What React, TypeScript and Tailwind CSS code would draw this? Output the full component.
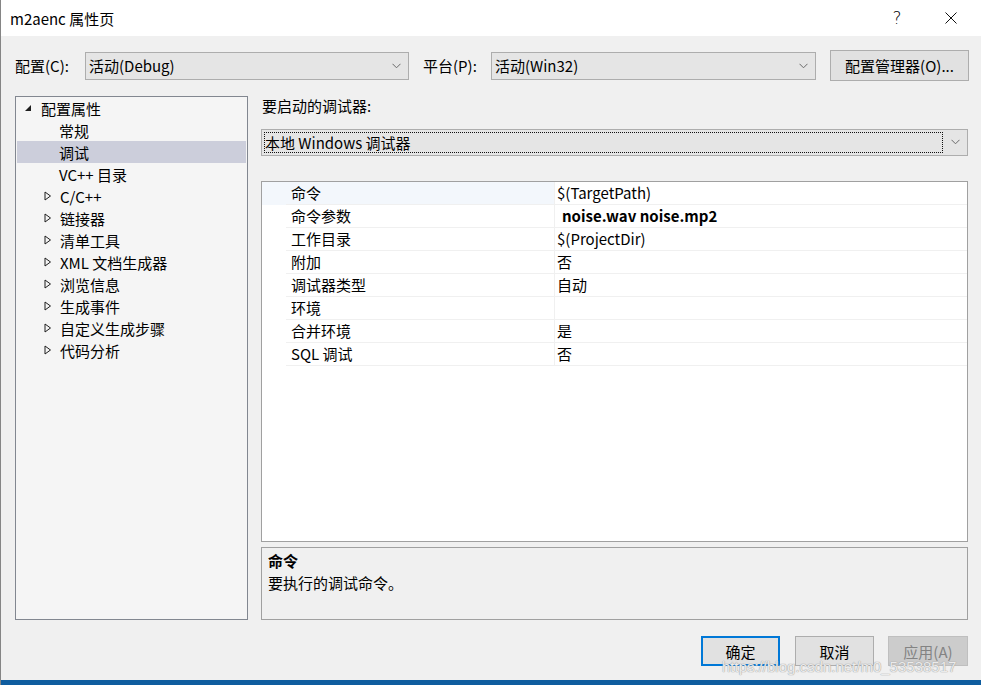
import React from "react";

const FONT = { fontFamily: '"Noto Sans CJK SC", "Noto Sans", sans-serif' };

function Chevron() {
  return (
    <svg width="9" height="6" viewBox="0 0 9 6" className="shrink-0">
      <path d="M0.5 0.8 L4.5 4.8 L8.5 0.8" fill="none" stroke="#6a6a6a" strokeWidth="1" />
    </svg>
  );
}

function Combo({ text, width }: { text: string; width: string }) {
  return (
    <div className={`${width} h-[28px] bg-[#e5e5e5] border border-[#adadad] flex items-center pl-[3px] pr-[7px]`}>
      <span className="flex-1 text-[15px] leading-none text-black">{text}</span>
      <Chevron />
    </div>
  );
}

function ExpandedTri() {
  return (
    <svg width="8" height="8" viewBox="0 0 8 8" className="shrink-0">
      <polygon points="7,1 7,7 1,7" fill="#1e1e1e" />
    </svg>
  );
}

function CollapsedTri() {
  return (
    <svg width="8" height="10" viewBox="0 0 8 10" className="shrink-0">
      <polygon points="1,1 6.5,5 1,9" fill="none" stroke="#1e1e1e" strokeWidth="1" />
    </svg>
  );
}

const children = ["常规", "调试", "VC++ 目录"];
const collapsed = ["C/C++", "链接器", "清单工具", "XML 文档生成器", "浏览信息", "生成事件", "自定义生成步骤", "代码分析"];

const props: [string, string, boolean?][] = [
  ["命令", "$(TargetPath)"],
  ["命令参数", "noise.wav noise.mp2", true],
  ["工作目录", "$(ProjectDir)"],
  ["附加", "否"],
  ["调试器类型", "自动"],
  ["环境", ""],
  ["合并环境", "是"],
  ["SQL 调试", "否"],
];

export default function App() {
  return (
    <div style={FONT} className="w-[981px] h-[685px] bg-[#f0f0f0] flex flex-col border-l border-[#858585] overflow-hidden relative text-black">
      {/* Title bar */}
      <div className="h-[36px] bg-white flex items-center shrink-0">
        <span className="pl-[9px] text-[15px] leading-none flex-1">m2aenc 属性页</span>
        <span className="w-[20px] text-center text-[17px] leading-none mr-[38px]" style={{ fontFamily: '"DejaVu Sans", sans-serif', fontWeight: 200 }}>?</span>
        <svg width="12" height="12" viewBox="0 0 12 12" className="mr-[24px]">
          <path d="M0.5 0.5 L11.5 11.5 M11.5 0.5 L0.5 11.5" stroke="#111" strokeWidth="1" />
        </svg>
      </div>

      {/* Config row */}
      <div className="mt-[14px] h-[31px] flex items-center shrink-0 pl-[14px]">
        <span className="w-[70px] text-[15px] leading-none">配置(C):</span>
        <Combo text="活动(Debug)" width="w-[324px]" />
        <span className="ml-[14px] w-[68px] text-[15px] leading-none">平台(P):</span>
        <Combo text="活动(Win32)" width="w-[325px]" />
        <div className="ml-[14px] w-[139px] h-[31px] bg-[#e1e1e1] border border-[#adadad] flex items-center justify-center text-[15px] leading-none">
          配置管理器(O)...
        </div>
      </div>

      {/* Main area */}
      <div className="mt-[15px] h-[524px] flex shrink-0 pl-[14px]">
        {/* Tree */}
        <div className="w-[233px] h-full bg-[#f5f5f5] border border-[#828790] px-[1px] flex flex-col">
          <div className="h-[22px] flex items-center pl-[7px]">
            <ExpandedTri />
            <span className="ml-[9px] text-[15px] leading-none">配置属性</span>
          </div>
          {children.map((c) => (
            <div key={c} className={`h-[22px] flex items-center pl-[42px] ${c === "调试" ? "bg-[#cccedb]" : ""}`}>
              <span className="text-[15px] leading-none">{c}</span>
            </div>
          ))}
          {collapsed.map((c) => (
            <div key={c} className="h-[22px] flex items-center pl-[27px]">
              <CollapsedTri />
              <span className="ml-[8px] text-[15px] leading-none">{c}</span>
            </div>
          ))}
        </div>

        {/* Right column */}
        <div className="ml-[13px] w-[707px] flex flex-col">
          <div className="h-[20px] flex items-center pl-[1px] text-[15px] leading-none">要启动的调试器:</div>
          <div className="mt-[13px] h-[27px] bg-[#e5e5e5] border border-[#adadad] flex items-center p-[2px] pr-[7px]">
            <div className="flex-1 h-[21px] border border-dotted border-[#111] flex items-center">
              <span className="text-[15px] leading-none">本地 Windows 调试器</span>
            </div>
            <div className="w-[17px] flex justify-end">
              <Chevron />
            </div>
          </div>

          {/* Property grid */}
          <div className="mt-[25px] h-[362px] bg-white border border-[#a0a0a0] flex flex-col">
            {props.map(([name, val, bold], i) => (
              <div key={name} className={`h-[23px] flex ${i === 0 ? "bg-[#f3f7fc]" : ""}`}>
                <div className="w-[24px] shrink-0" />
                <div className="w-[268px] shrink-0 border-b border-[#f0f0f0] flex items-center pl-[5px] text-[15px] leading-none">
                  {name}
                </div>
                <div className="w-[1px] bg-[#f0f0f0] shrink-0" />
                <div className={`flex-1 border-b border-[#f0f0f0] flex items-center text-[15px] leading-none ${i === 0 ? "bg-white" : ""} ${bold ? "pl-[7px] font-bold" : "pl-[2px]"}`}>
                  {val}
                </div>
              </div>
            ))}
          </div>

          {/* Description */}
          <div className="mt-[5px] h-[73px] bg-[#f0f0f0] border border-[#a0a0a0] flex flex-col pl-[6px] pt-[2px]">
            <div className="h-[21px] flex items-center text-[15px] leading-none font-bold">命令</div>
            <div className="h-[23px] flex items-center text-[15px] leading-none">要执行的调试命令。</div>
          </div>
        </div>
      </div>

      {/* Buttons */}
      <div className="mt-[16px] h-[30px] flex justify-end pr-[13px] shrink-0">
        <div className="w-[79px] h-[30px] bg-[#e1e1e1] border-2 border-[#0078d7] flex items-center justify-center text-[15px] leading-none">确定</div>
        <div className="ml-[15px] w-[79px] h-[30px] bg-[#e1e1e1] border border-[#adadad] flex items-center justify-center text-[15px] leading-none">取消</div>
        <div className="ml-[14px] w-[80px] h-[30px] bg-[#cccccc] border border-[#bfbfbf] flex items-center justify-center text-[15px] leading-none text-[#838383]">应用(A)</div>
      </div>

      <div className="mt-[14px] h-[5px] bg-[#0f5d9f] shrink-0" />

      {/* Watermark */}
      <div
        className="absolute left-[721px] top-[659px] text-[15px] leading-none text-white/80 whitespace-nowrap pointer-events-none"
        style={{ fontFamily: '"Liberation Sans", sans-serif', textShadow: "0 0 1px #9a9a9a, 0 0 1px #9a9a9a" }}
      >
        https://blog.csdn.net/m0_53538517
      </div>
    </div>
  );
}
